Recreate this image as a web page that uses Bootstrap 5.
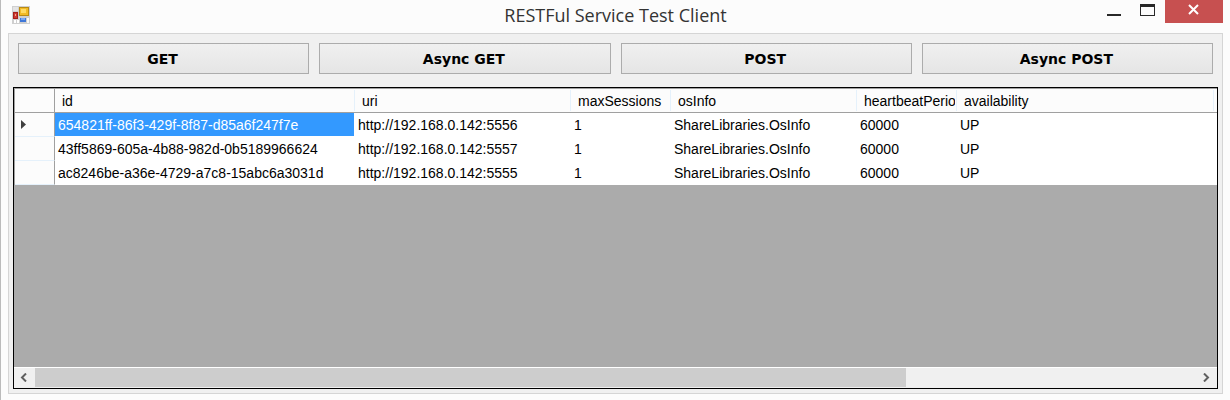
<!DOCTYPE html>
<html lang="en">
<head>
<meta charset="utf-8">
<meta name="viewport" content="width=device-width, initial-scale=1">
<title>RESTFul Service Test Client</title>
<link href="https://cdn.jsdelivr.net/npm/bootstrap@5.3.0/dist/css/bootstrap.min.css" rel="stylesheet">
<style>
  body { background: #fcfcfc; color: #000; font-family: "Liberation Sans", Arial, sans-serif; font-size: 14px; }
  .app-window { border-left: 1px solid #bbb; padding: 0 7px 6px; }
  .title-bar { height: 33px; padding-right: 0; }
  .title-side { flex: 1 1 0; }
  .title-text { font-family: "Open Sans", "Segoe UI", sans-serif; font-size: 18px; line-height: 30px; color: #333; padding-right: 4px; }
  .app-icon { padding: 6px 0 0 4px; }
  .win-btn { border: 0; background: none; padding: 0; width: 34px; height: 23px; }
  .win-close { width: 58px; background: #c75050; }
  .client-area { border: 1px solid #d5d5d5; background: #f0f0f0; padding: 9px 4px 4px; }
  .action-row { padding: 0 5px; gap: 10px; margin-bottom: 13px; }
  .action-btn { border: 1px solid #acacac; border-radius: 0; background: linear-gradient(#f0f0f0, #e5e5e5); color: #000;
    font: bold 14px/28px "DejaVu Sans", Verdana, sans-serif; padding: 1px 2px 0 0; flex: 1 1 0; }
  .grid-view { border: 1px solid #000; background: #ababab; }
  .grid-scroll { min-height: 0; }
  .data-grid { table-layout: fixed; width: 100%; border-collapse: separate; border-spacing: 0; background: #fff;
    border-top: 1px solid #a0a0a0; border-left: 1px solid #a0a0a0; }
  .data-grid th, .data-grid td { height: 24px; padding: 0 3px; line-height: 23px; font-weight: 400; overflow: hidden; white-space: nowrap; }
  .data-grid thead th { background: #fcfcfc; border-bottom: 1px solid #a0a0a0; padding: 1px 2px 0 7px; line-height: 22px;
    background-image: linear-gradient(#e5f1fb, #e5f1fb); background-size: 1px 21px; background-position: right 1px; background-repeat: no-repeat; }
  .data-grid thead th span { display: block; overflow: hidden; }
  .data-grid thead th:last-child { background-image: none; }
  .data-grid thead td { background: #fcfcfc; border-right: 1px solid #a0a0a0; border-bottom: 1px solid #a0a0a0; }
  .data-grid tbody th { background: #fcfcfc; border-right: 1px solid #a0a0a0; border-bottom: 1px solid #e5f1fb; padding-left: 6px; }
  .data-grid tbody th svg { display: block; }
  .data-grid td.selected-cell { color: #fff; background: #39f; border-right: 1px solid #fff; border-bottom: 1px solid #fff; padding-top: 1px; line-height: 22px; }
  .scroll-strip { height: 21px; border-top: 1px solid #fff; background: #f0f0f0; }
  .scroll-strip button { width: 21px; border: 0; padding: 0 2px 2px 0; background: none; line-height: 0; }
  .scroll-strip button:last-child { padding-right: 0; }
  .scroll-thumb { height: 19px; background: #cdcdcd; }
</style>
<script src="https://cdn.jsdelivr.net/npm/bootstrap@5.3.0/dist/js/bootstrap.bundle.min.js"></script>
</head>
<body>
<main class="app-window min-vh-100 d-flex flex-column">
  <header class="title-bar d-flex align-items-start">
    <div class="title-side app-icon">
      <svg class="d-block" width="18" height="18" viewBox="0 0 18 18" aria-hidden="true">
        <rect width="18" height="18" fill="#cfcfcf"/>
        <rect x="1" y="1" width="5" height="4" fill="#e4e4e4"/>
        <rect x="2" y="14" width="2" height="3" fill="#fff"/><rect x="5" y="14" width="2" height="3" fill="#fff"/>
        <rect x="15" y="12" width="2" height="5" fill="#f8f8f8"/>
        <rect x="1" y="6" width="5" height="7" fill="#a51f1b"/><rect x="2" y="7" width="3" height="5" fill="#cc3a30"/><rect x="3" y="8" width="1" height="2" fill="#f0a090"/>
        <rect x="7" y="1" width="10" height="9" fill="#b98a12"/><rect x="8" y="2" width="8" height="7" fill="#f2bb25"/><rect x="9" y="3" width="5" height="4" fill="#ffdb63"/>
        <rect x="8" y="12" width="6" height="4" fill="#3f78d8"/><rect x="9" y="12" width="4" height="2" fill="#76a8f4"/>
      </svg>
    </div>
    <h1 class="title-text m-0 fw-normal">RESTFul Service Test Client</h1>
    <div class="title-side d-flex justify-content-end">
      <button class="win-btn" type="button" aria-label="Minimize"><svg class="d-block mx-auto" width="14" height="23" fill="#282828"><path d="M0 14h14v2H0z"/></svg></button>
      <button class="win-btn" type="button" aria-label="Maximize"><svg class="d-block mx-auto" width="16" height="23" fill="#282828"><path fill-rule="evenodd" d="M0 4h15v12H0zM1 7v8h13V7z"/></svg></button>
      <button class="win-btn win-close" type="button" aria-label="Close"><svg class="d-block mx-auto" width="12" height="23" stroke="#fff" stroke-width="2"><path d="M1 5l9 9M10 5l-9 9"/></svg></button>
    </div>
  </header>
  <section class="client-area flex-grow-1 d-flex flex-column">
    <div class="action-row d-flex">
      <button class="action-btn" type="button">GET</button>
      <button class="action-btn" type="button">Async GET</button>
      <button class="action-btn" type="button">POST</button>
      <button class="action-btn" type="button">Async POST</button>
    </div>
    <div class="grid-view flex-grow-1 d-flex flex-column">
      <div class="grid-scroll flex-grow-1">
        <table class="data-grid">
          <colgroup><col style="width:40px"><col style="width:300px"><col style="width:216px"><col style="width:100px"><col style="width:186px"><col style="width:100px"><col><col style="width:3px"></colgroup>
          <thead><tr><td></td><th scope="col"><span>id</span></th><th scope="col"><span>uri</span></th><th scope="col"><span>maxSessions</span></th><th scope="col"><span>osInfo</span></th><th scope="col"><span>heartbeatPeriod</span></th><th scope="col"><span>availability</span></th><th class="p-0"></th></tr></thead>
          <tbody>
            <tr><th scope="row" aria-label="Current row"><svg width="5" height="9" fill="#404040"><path d="M0 0l5 4.500-5 4.500z"/></svg></th><td class="selected-cell">654821ff-86f3-429f-8f87-d85a6f247f7e</td><td>http://192.168.0.142:5556</td><td>1</td><td>ShareLibraries.OsInfo</td><td>60000</td><td>UP</td><td class="p-0"></td></tr>
            <tr><th scope="row"></th><td>43ff5869-605a-4b88-982d-0b5189966624</td><td>http://192.168.0.142:5557</td><td>1</td><td>ShareLibraries.OsInfo</td><td>60000</td><td>UP</td><td class="p-0"></td></tr>
            <tr><th scope="row"></th><td>ac8246be-a36e-4729-a7c8-15abc6a3031d</td><td>http://192.168.0.142:5555</td><td>1</td><td>ShareLibraries.OsInfo</td><td>60000</td><td>UP</td><td class="p-0"></td></tr>
          </tbody>
        </table>
      </div>
      <div class="scroll-strip d-flex">
        <button type="button" aria-label="Scroll left"><svg width="7" height="9" fill="none" stroke="#606060" stroke-width="2"><path d="M6 0.500L2 4.500l4 4"/></svg></button>
        <div class="flex-grow-1"><div class="scroll-thumb" style="width:75%"></div></div>
        <button type="button" aria-label="Scroll right"><svg width="7" height="9" fill="none" stroke="#606060" stroke-width="2"><path d="M1 0.500l4 4-4 4"/></svg></button>
      </div>
    </div>
  </section>
</main>
</body>
</html>
